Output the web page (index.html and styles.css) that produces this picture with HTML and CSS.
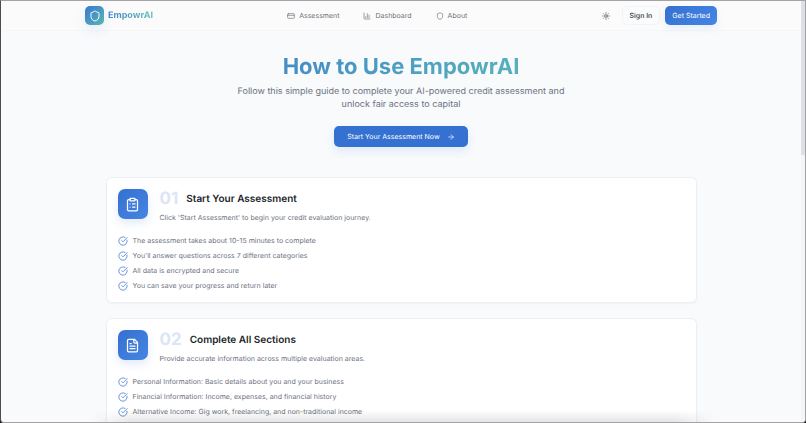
FILE: index.html
```html
<!DOCTYPE html>
<html lang="en">
<head>
    <meta charset="UTF-8">
    <meta name="viewport" content="width=device-width, initial-scale=1.0">
    <title>How to Use EmpowrAI</title>
    <link rel="stylesheet" href="styles.css">
</head>
<body>
    <div class="window">
        <div class="page">
            <header class="header">
                <div class="container header-row">
                    <a class="brand" href="#">
                        <span class="brand-icon">
                            <svg class="icon" viewBox="0 0 24 24"><path d="M20 13c0 5-3.5 7.5-7.66 8.95a1 1 0 0 1-.67-.01C7.5 20.5 4 18 4 13V6a1 1 0 0 1 1-1c2 0 4.5-1.2 6.24-2.72a1.17 1.17 0 0 1 1.52 0C14.51 3.81 17 5 19 5a1 1 0 0 1 1 1z"/></svg>
                        </span>
                        <span class="brand-name">EmpowrAI</span>
                    </a>
                    <nav class="nav">
                        <a href="#">
                            <svg class="icon" viewBox="0 0 24 24"><rect x="2" y="5" width="20" height="14" rx="2"/><path d="M2 10h20"/></svg>
                            Assessment
                        </a>
                        <a href="#">
                            <svg class="icon" viewBox="0 0 24 24"><path d="M3 3v16a2 2 0 0 0 2 2h16M18 17V9M13 17V5M8 17v-3"/></svg>
                            Dashboard
                        </a>
                        <a href="#">
                            <svg class="icon" viewBox="0 0 24 24"><path d="M20 13c0 5-3.5 7.5-7.66 8.95a1 1 0 0 1-.67-.01C7.5 20.5 4 18 4 13V6a1 1 0 0 1 1-1c2 0 4.5-1.2 6.24-2.72a1.17 1.17 0 0 1 1.52 0C14.51 3.81 17 5 19 5a1 1 0 0 1 1 1z"/></svg>
                            About
                        </a>
                    </nav>
                    <div class="actions">
                        <button class="btn-theme" type="button" aria-label="Toggle theme">
                            <svg class="icon" viewBox="0 0 24 24"><circle cx="12" cy="12" r="4"/><path d="M12 2v2M12 20v2M4.9 4.9l1.4 1.4M17.7 17.7l1.4 1.4M2 12h2M20 12h2M6.3 17.7l-1.4 1.4M19.1 4.9l-1.4 1.4"/></svg>
                        </button>
                        <button class="btn btn-outline" type="button">Sign In</button>
                        <button class="btn btn-primary" type="button">Get Started</button>
                    </div>
                </div>
            </header>

            <main class="main">
                <section class="hero">
                    <h1>How to Use EmpowrAI</h1>
                    <p>Follow this simple guide to complete your AI-powered credit assessment and unlock fair access to capital</p>
                    <button class="btn btn-hero" type="button">
                        Start Your Assessment Now
                        <svg class="icon" viewBox="0 0 24 24"><path d="M5 12h14M12 5l7 7-7 7"/></svg>
                    </button>
                </section>

                <section class="steps">
                    <article class="card">
                        <div class="card-head">
                            <span class="card-icon">
                                <svg class="icon" viewBox="0 0 24 24"><rect x="8" y="2" width="8" height="4" rx="1"/><path d="M16 4h2a2 2 0 0 1 2 2v14a2 2 0 0 1-2 2H6a2 2 0 0 1-2-2V6a2 2 0 0 1 2-2h2M12 11h4M12 16h4M8 11h.01M8 16h.01"/></svg>
                            </span>
                            <div>
                                <div class="card-title">
                                    <span class="step-number">01</span>
                                    <h2>Start Your Assessment</h2>
                                </div>
                                <p>Click 'Start Assessment' to begin your credit evaluation journey.</p>
                            </div>
                        </div>
                        <ul class="checks">
                            <li><svg class="icon" viewBox="0 0 24 24"><path d="M21.8 10A10 10 0 1 1 17 3.34M9 11l3 3L22 4"/></svg>The assessment takes about 10-15 minutes to complete</li>
                            <li><svg class="icon" viewBox="0 0 24 24"><path d="M21.8 10A10 10 0 1 1 17 3.34M9 11l3 3L22 4"/></svg>You'll answer questions across 7 different categories</li>
                            <li><svg class="icon" viewBox="0 0 24 24"><path d="M21.8 10A10 10 0 1 1 17 3.34M9 11l3 3L22 4"/></svg>All data is encrypted and secure</li>
                            <li><svg class="icon" viewBox="0 0 24 24"><path d="M21.8 10A10 10 0 1 1 17 3.34M9 11l3 3L22 4"/></svg>You can save your progress and return later</li>
                        </ul>
                    </article>

                    <article class="card">
                        <div class="card-head">
                            <span class="card-icon">
                                <svg class="icon" viewBox="0 0 24 24"><path d="M15 2H6a2 2 0 0 0-2 2v16a2 2 0 0 0 2 2h12a2 2 0 0 0 2-2V7zM14 2v4a2 2 0 0 0 2 2h4M10 9H8M16 13H8M16 17H8"/></svg>
                            </span>
                            <div>
                                <div class="card-title">
                                    <span class="step-number">02</span>
                                    <h2>Complete All Sections</h2>
                                </div>
                                <p>Provide accurate information across multiple evaluation areas.</p>
                            </div>
                        </div>
                        <ul class="checks">
                            <li><svg class="icon" viewBox="0 0 24 24"><path d="M21.8 10A10 10 0 1 1 17 3.34M9 11l3 3L22 4"/></svg>Personal Information: Basic details about you and your business</li>
                            <li><svg class="icon" viewBox="0 0 24 24"><path d="M21.8 10A10 10 0 1 1 17 3.34M9 11l3 3L22 4"/></svg>Financial Information: Income, expenses, and financial history</li>
                            <li><svg class="icon" viewBox="0 0 24 24"><path d="M21.8 10A10 10 0 1 1 17 3.34M9 11l3 3L22 4"/></svg>Alternative Income: Gig work, freelancing, and non-traditional income</li>
                            <li><svg class="icon" viewBox="0 0 24 24"><path d="M21.8 10A10 10 0 1 1 17 3.34M9 11l3 3L22 4"/></svg></li>
                        </ul>
                    </article>
                </section>
            </main>
        </div>
        <div class="scrollbar"><div class="scrollbar-thumb"></div></div>
        <div class="bottom-shade"></div>
    </div>
</body>
</html>
```
FILE: styles.css
```css
* {
    box-sizing: border-box;
    margin: 0;
    padding: 0;
}
body {
    font-family: Inter, "Liberation Sans", sans-serif;
    font-size: 7px;
    text-rendering: geometricPrecision;
    background-color: #17171a;
    color: #6d7280;
}
a {
    color: inherit;
    text-decoration: none;
}
button {
    font-family: inherit;
    text-rendering: inherit;
    border: none;
    cursor: pointer;
}
.icon {
    flex: none;
    width: 8px;
    height: 8px;
    fill: none;
    stroke: currentColor;
    stroke-width: 2;
    stroke-linecap: round;
    stroke-linejoin: round;
}

/* window frame */
.window {
    position: relative;
    display: flex;
    height: 100vh;
    overflow: hidden;
    border: 1px solid #a3a2a5;
    border-left-color: #4b4b50;
    border-radius: 0 0 4px 4px;
    background-color: #f8fafc;
}
.page {
    flex: 1;
    overflow: hidden;
}
.scrollbar {
    width: 4px;
    background-color: #f3f5f8;
}
.scrollbar-thumb {
    height: 154px;
    background-color: #dcdfe6;
}
.bottom-shade {
    position: absolute;
    left: 90px;
    right: 90px;
    bottom: 0;
    height: 12px;
    background: linear-gradient(to bottom, rgba(0, 0, 0, 0), rgba(0, 0, 0, 0.1));
    -webkit-mask-image: linear-gradient(to right, transparent, #000 40px, #000 calc(100% - 40px), transparent);
    mask-image: linear-gradient(to right, transparent, #000 40px, #000 calc(100% - 40px), transparent);
}

/* header */
.header {
    height: 30px;
    background-color: #fbfbfb;
    border-bottom: 1px solid #f4f6f8;
}
.container {
    max-width: 632px;
    margin: 0 auto;
}
.header-row {
    display: flex;
    align-items: center;
    justify-content: space-between;
    height: 100%;
}
.brand {
    display: flex;
    align-items: center;
    gap: 4px;
}
.brand-icon {
    display: flex;
    align-items: center;
    justify-content: center;
    width: 19px;
    height: 19px;
    border-radius: 5px;
    background: linear-gradient(135deg, #3b76cf, #55b8b2);
    box-shadow: 0 4px 12px rgba(59, 118, 207, 0.12);
    color: #fff;
}
.brand-icon .icon {
    width: 12px;
    height: 12px;
}
.brand-name {
    font-size: 9px;
    line-height: 12px;
    font-weight: 700;
    background: linear-gradient(90deg, #4480cb, #62c1b5);
    -webkit-background-clip: text;
    background-clip: text;
    color: transparent;
}
.nav {
    display: flex;
    gap: 24px;
}
.nav a {
    display: flex;
    align-items: center;
    gap: 4px;
}
.actions {
    display: flex;
    align-items: center;
}
.btn-theme {
    display: flex;
    margin-right: 12px;
    background: none;
    color: #3f4450;
}
.btn {
    height: 19px;
    border-radius: 5px;
    font-size: 7px;
    font-weight: 400;
    color: #fff;
}
.btn-outline {
    margin-right: 5px;
    padding: 0 7px;
    border: 1px solid #f0f4f9;
    background-color: #fbfcfd;
    color: #30343e;
    font-weight: 500;
}
.btn-primary {
    padding: 0 7px;
    background: linear-gradient(135deg, #3570cf, #4685e4);
    box-shadow: 0 3px 8px rgba(53, 112, 207, 0.1);
}

/* hero */
.main {
    max-width: 591px;
    margin: 0 auto;
    padding-top: 21px;
}
.hero {
    display: flex;
    flex-direction: column;
    align-items: center;
    text-align: center;
}
.hero h1 {
    width: 100%;
    font-size: 22px;
    line-height: 30px;
    font-weight: 700;
    background: linear-gradient(135deg, #3570cf, #66cdb3);
    -webkit-background-clip: text;
    background-clip: text;
    color: transparent;
}
.hero p {
    max-width: 332px;
    margin-top: 3px;
    font-size: 9px;
    line-height: 13px;
}
.btn-hero {
    display: flex;
    align-items: center;
    gap: 7px;
    height: 21px;
    margin-top: 15px;
    padding: 0 13px;
    background-color: #3571d0;
    box-shadow: 0 4px 10px rgba(53, 113, 208, 0.12);
}

/* steps */
.steps {
    display: flex;
    flex-direction: column;
    gap: 15px;
    margin-top: 30px;
}
.card {
    padding: 11px;
    border: 1px solid #eceff3;
    border-radius: 6px;
    background-color: #fff;
    box-shadow: 0 1px 2px rgba(20, 30, 60, 0.04);
}
.card-head {
    display: flex;
    gap: 12px;
}
.card-icon {
    display: flex;
    align-items: center;
    justify-content: center;
    width: 30px;
    height: 30px;
    border-radius: 7px;
    background: linear-gradient(135deg, #3570cf, #4685e4);
    box-shadow: 0 4px 10px rgba(53, 113, 208, 0.14);
    color: #fff;
}
.card-icon .icon {
    width: 15px;
    height: 15px;
}
.card-title {
    display: flex;
    align-items: center;
    gap: 8px;
    height: 20px;
}
.step-number {
    font-size: 17px;
    font-weight: 700;
    color: #dbe5f6;
}
.card h2 {
    font-size: 10px;
    font-weight: 600;
    color: #1b1f2a;
}
.card p {
    margin-top: 3px;
    line-height: 11px;
}
.checks {
    display: flex;
    flex-direction: column;
    gap: 4px;
    margin-top: 12px;
    list-style: none;
}
.checks li {
    display: flex;
    align-items: center;
    gap: 5px;
    min-height: 11px;
}
.checks .icon {
    width: 10px;
    height: 10px;
    color: #4a80d8;
}
```
